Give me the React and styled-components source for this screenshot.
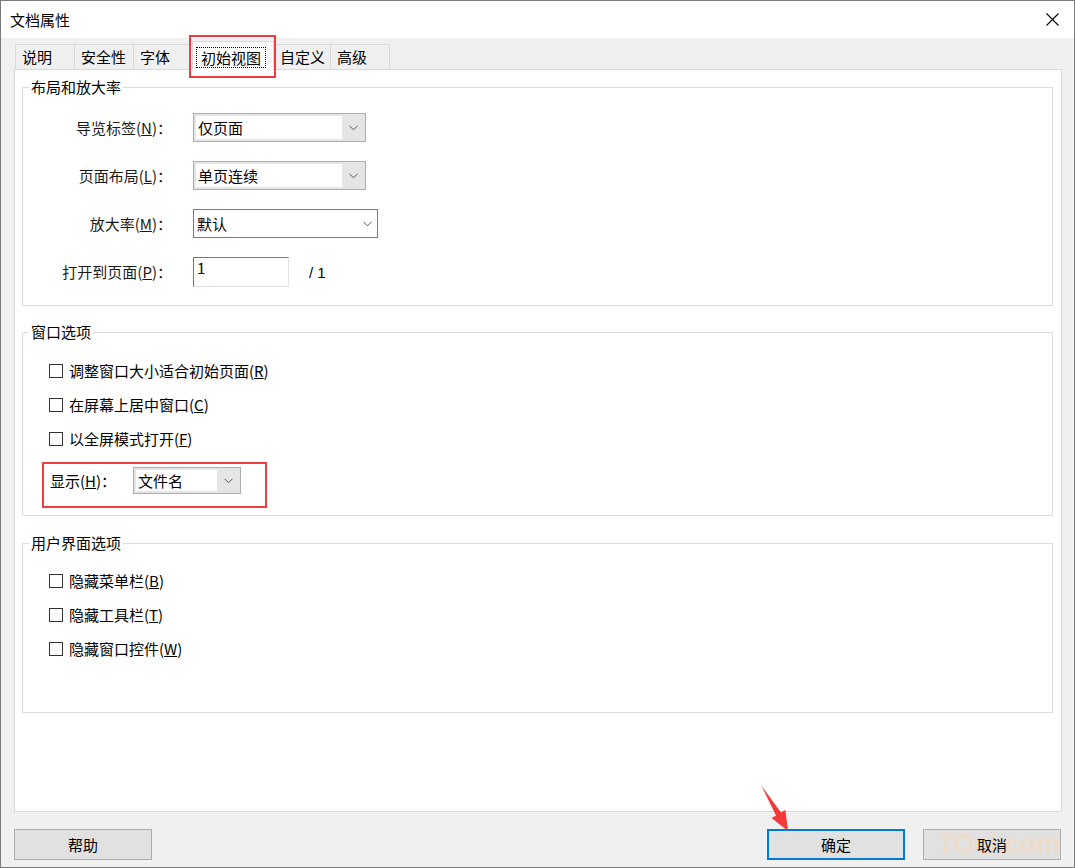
import styled, { createGlobalStyle } from "styled-components";

const GlobalStyle = createGlobalStyle`
    body {
        margin: 0;
        background: #ffffff;
        font-family: "Noto Sans CJK SC", "Noto Sans", sans-serif;
        font-size: 15px;
        color: #000;
    }
`;

const tabs = [
    { label: "说明", width: 60 },
    { label: "安全性", width: 60 },
    { label: "字体", width: 60 },
    { label: "初始视图", width: 82, active: true },
    { label: "自定义", width: 58 },
    { label: "高级", width: 60 },
];

const Chevron = () => (
    <svg width="9" height="6" viewBox="0 0 9 6">
        <polyline points="0.5,0.8 4.5,4.8 8.5,0.8" fill="none" stroke="#555" strokeWidth="1" />
    </svg>
);

const CloseIcon = () => (
    <svg width="13" height="13" viewBox="0 0 13 13">
        <line x1="0.5" y1="0.5" x2="12.5" y2="12.5" stroke="#000" strokeWidth="1.1" />
        <line x1="12.5" y1="0.5" x2="0.5" y2="12.5" stroke="#000" strokeWidth="1.1" />
    </svg>
);

const Arrow = () => (
    <ArrowSvg width="40" height="56" viewBox="0 0 40 56">
        <polygon points="6,5 26,32.5 30.4,29.9 33,51 16.6,38.1 21,35.5" fill="#f23a3a" />
    </ArrowSvg>
);

const Select = ({ value, width, height = 29, edit }) => (
    <Combo $w={width} $h={height} $edit={edit}>
        <ComboText $edit={edit}>{value}</ComboText>
        <ComboArrow $edit={edit}>
            <Chevron />
        </ComboArrow>
    </Combo>
);

const Check = ({ children }) => (
    <CheckRow>
        <Box />
        <span>{children}</span>
    </CheckRow>
);

export default function App() {
    return (
        <>
            <GlobalStyle />
            <Window>
                <TitleBar>
                    <span>文档属性</span>
                    <CloseIcon />
                </TitleBar>

                <Body>
                    <TabRow>
                        {tabs.map((t) =>
                            t.active ? (
                                <ActiveTab key={t.label} $w={t.width}>
                                    <Focus>{t.label}</Focus>
                                </ActiveTab>
                            ) : (
                                <Tab key={t.label} $w={t.width}>
                                    {t.label}
                                </Tab>
                            )
                        )}
                    </TabRow>

                    <Panel>
                        <Group $top={7}>
                            <Legend>布局和放大率</Legend>
                            <FormGrid>
                                <Label>导览标签(<u>N</u>)：</Label>
                                <Select value="仅页面" width={173} />

                                <Label>页面布局(<u>L</u>)：</Label>
                                <Select value="单页连续" width={173} />

                                <Label>放大率(<u>M</u>)：</Label>
                                <Select value="默认" width={185} edit />

                                <Label>打开到页面(<u>P</u>)：</Label>
                                <PageRow>
                                    <PageInput>1</PageInput>
                                    <PageCount>/ 1</PageCount>
                                </PageRow>
                            </FormGrid>
                        </Group>

                        <Group $top={16}>
                            <Legend>窗口选项</Legend>
                            <OptionList $pt={19} $pb={7}>
                                <Check>调整窗口大小适合初始页面(<u>R</u>)</Check>
                                <Check>在屏幕上居中窗口(<u>C</u>)</Check>
                                <Check>以全屏模式打开(<u>F</u>)</Check>
                                <Highlight>
                                    <ShowLabel>显示(<u>H</u>)：</ShowLabel>
                                    <Select value="文件名" width={108} height={27} />
                                </Highlight>
                            </OptionList>
                        </Group>

                        <Group $top={17}>
                            <Legend>用户界面选项</Legend>
                            <OptionList $pt={18} $pb={53}>
                                <Check>隐藏菜单栏(<u>B</u>)</Check>
                                <Check>隐藏工具栏(<u>T</u>)</Check>
                                <Check>隐藏窗口控件(<u>W</u>)</Check>
                            </OptionList>
                        </Group>
                    </Panel>

                    <ButtonBar>
                        <Button>帮助</Button>
                        <ButtonGroup>
                            <Button $primary>确定</Button>
                            <Button>
                                <Watermark aria-hidden="true">7Ool.com</Watermark>
                                <ButtonText>取消</ButtonText>
                            </Button>
                        </ButtonGroup>
                    </ButtonBar>
                </Body>

                <Arrow />
            </Window>
        </>
    );
}

const Window = styled.div`
    position: relative;
    box-sizing: border-box;
    width: 1075px;
    height: 868px;
    border: 1px solid #7a7a7a;
    background: #f0f0f0;
    display: flex;
    flex-direction: column;
    overflow: hidden;
`;

const TitleBar = styled.div`
    height: 37px;
    background: #fff;
    display: flex;
    align-items: center;
    justify-content: space-between;
    padding: 0 15px 0 9px;
    line-height: 20px;

    svg {
        margin-top: -1px;
    }
`;

const Body = styled.div`
    flex: 1;
    display: flex;
    flex-direction: column;
    padding: 0 12px 0 13px;
`;

const TabRow = styled.div`
    display: flex;
    align-items: flex-end;
    height: 29px;
    margin: 3px 0 -1px 1px;
`;

const Tab = styled.div`
    box-sizing: border-box;
    width: ${(p) => p.$w}px;
    height: 25px;
    margin: 0 -1px 1px 0;
    padding-left: 6px;
    border: 1px solid #d9d9d9;
    border-bottom: none;
    background: #f0f0f0;
    line-height: 23px;
    white-space: nowrap;
`;

const ActiveTab = styled.div`
    position: relative;
    z-index: 1;
    box-sizing: border-box;
    width: ${(p) => p.$w}px;
    height: 29px;
    margin-right: -1px;
    padding: 5px 0 0 3px;
    border: 1px solid #d9d9d9;
    border-bottom: none;
    background: #fff;
    white-space: nowrap;

    &::after {
        content: "";
        position: absolute;
        top: -7px;
        left: -4px;
        right: -3px;
        bottom: -8px;
        border: 2px solid #f23c3c;
        pointer-events: none;
    }
`;

const Focus = styled.span`
    display: inline-block;
    padding: 0 4px;
    border: 1px dotted #000;
    line-height: 19px;
`;

const Panel = styled.div`
    position: relative;
    z-index: 0;
    box-sizing: border-box;
    height: 743px;
    border: 1px solid #d9d9d9;
    background: #fff;
    padding: 0 8px 0 7px;
`;

const Group = styled.fieldset`
    margin: ${(p) => p.$top}px 0 0 0;
    padding: 0;
    border: 1px solid #dcdcdc;
    min-width: 0;
`;

const Legend = styled.legend`
    margin-left: 6px;
    padding: 0 2px;
    line-height: 20px;
    color: #000;
`;

const FormGrid = styled.div`
    display: grid;
    grid-template-columns: 149px auto;
    column-gap: 21px;
    row-gap: 19px;
    align-items: center;
    justify-items: start;
    padding: 16px 0 18px 0;
`;

const Label = styled.div`
    justify-self: end;
    line-height: 20px;
    white-space: nowrap;
    color: #1a1a1a;
`;

const Combo = styled.div`
    display: flex;
    box-sizing: border-box;
    width: ${(p) => p.$w}px;
    height: ${(p) => p.$h}px;
    border: 1px solid ${(p) => (p.$edit ? "#7a7a7a" : "#adadad")};
    background: ${(p) => (p.$edit ? "#fff" : "#e5e5e5")};
    padding: ${(p) => (p.$edit ? "0" : "2px 0 2px 2px")};
`;

const ComboText = styled.div`
    flex: 1;
    background: #fff;
    padding-left: ${(p) => (p.$edit ? "3px" : "2px")};
    display: flex;
    align-items: center;
    line-height: 20px;
    white-space: nowrap;
`;

const ComboArrow = styled.div`
    width: ${(p) => (p.$edit ? "20px" : "23px")};
    display: flex;
    align-items: center;
    justify-content: center;
`;

const PageRow = styled.div`
    display: flex;
    align-items: center;
`;

const PageInput = styled.div`
    box-sizing: border-box;
    width: 96px;
    height: 30px;
    padding: 1px 3px;
    border-style: solid;
    border-width: 1px;
    border-color: #7a7a7a #e3e3e3 #e3e3e3 #7a7a7a;
    background: #fff;
    line-height: 18px;
`;

const PageCount = styled.span`
    margin-left: 20px;
    font-family: "Liberation Sans", Arial, sans-serif;
    font-size: 15px;
`;

const OptionList = styled.div`
    display: flex;
    flex-direction: column;
    align-items: flex-start;
    gap: 14px;
    padding: ${(p) => p.$pt}px 0 ${(p) => p.$pb}px 26px;
`;

const CheckRow = styled.div`
    display: flex;
    align-items: center;
    gap: 6px;
    height: 20px;
    line-height: 20px;
    white-space: nowrap;
`;

const Box = styled.span`
    box-sizing: border-box;
    width: 14px;
    height: 14px;
    border: 1px solid #333;
    background: #fff;
`;

const Highlight = styled.div`
    display: flex;
    align-items: center;
    box-sizing: border-box;
    width: 225px;
    margin: -1px 0 0 -7px;
    padding: 3px 0 12px 6px;
    border: 2px solid #f23c3c;
`;

const ShowLabel = styled.span`
    width: 83px;
    line-height: 20px;
    white-space: nowrap;
`;

const ButtonBar = styled.div`
    display: flex;
    justify-content: space-between;
    margin: 17px 1px 0 0;
`;

const ButtonGroup = styled.div`
    display: flex;
    gap: 18px;
`;

const Button = styled.button`
    position: relative;
    box-sizing: border-box;
    width: 138px;
    height: 31px;
    padding: 0;
    border: ${(p) => (p.$primary ? "2px solid #0078d7" : "1px solid #adadad")};
    background: #e1e1e1;
    font-family: inherit;
    font-size: 15px;
    color: #000;
`;

const ButtonText = styled.span`
    position: relative;
`;

const Watermark = styled.span`
    position: absolute;
    top: 0;
    left: 15px;
    font-family: "Liberation Sans", Arial, sans-serif;
    font-weight: bold;
    font-size: 27px;
    line-height: 29px;
    letter-spacing: -0.3px;
    color: rgba(255, 214, 170, 0.45);
    pointer-events: none;
    white-space: nowrap;
`;

const ArrowSvg = styled.svg`
    position: absolute;
    left: 754px;
    top: 779px;
    z-index: 2;
`;
